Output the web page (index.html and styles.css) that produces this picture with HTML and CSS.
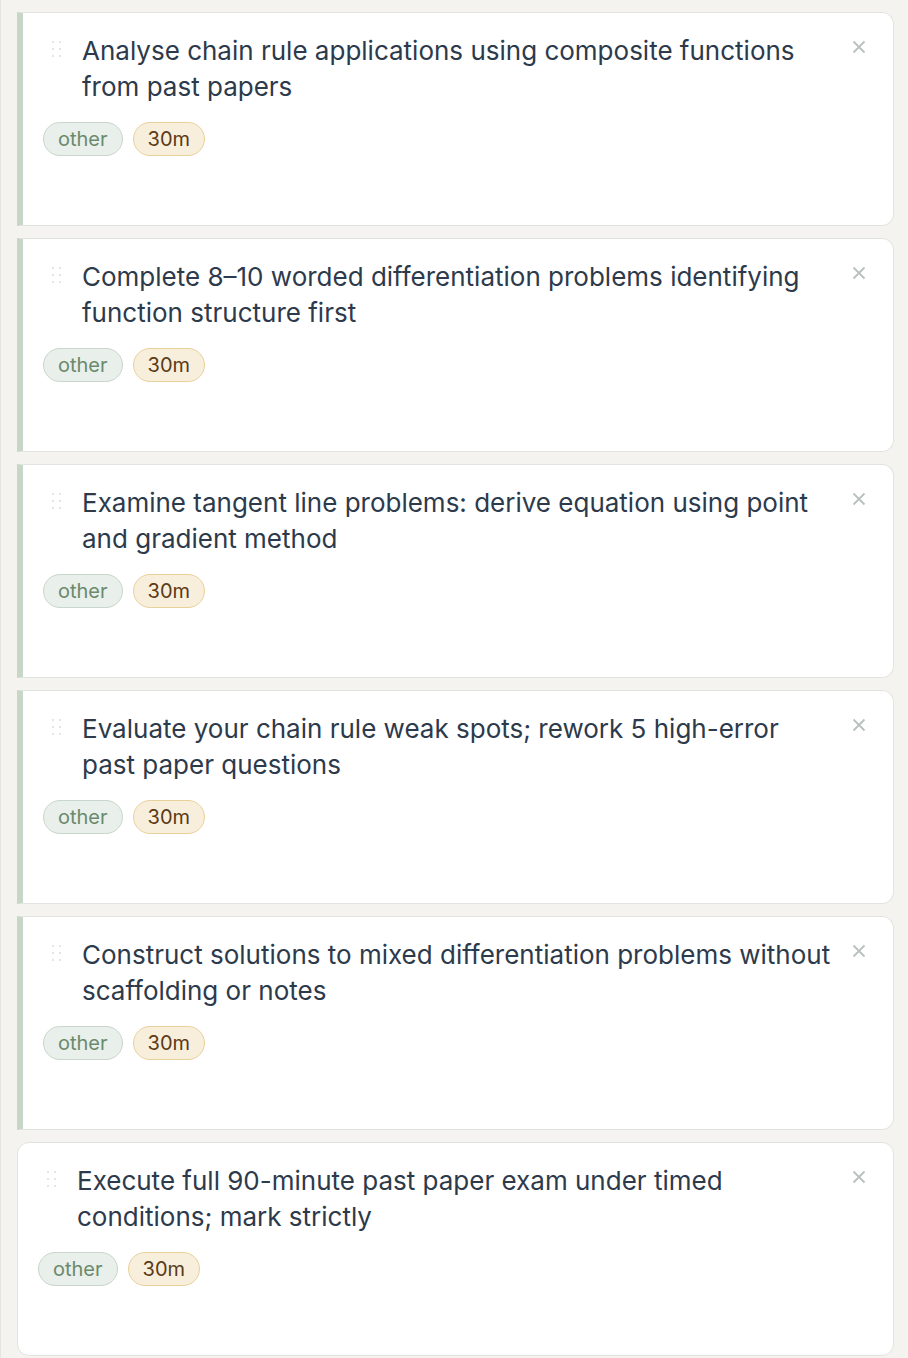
FILE: index.html
```html
<!DOCTYPE html>
<html lang="en">
<head>
  <meta charset="UTF-8">
  <title>Study tasks</title>
  <link rel="stylesheet" href="styles.css">
</head>
<body>

<div class="list">
  <div class="task marked">
    <div class="task-head">
      <span class="handle"><i></i><i></i><i></i><i></i><i></i><i></i></span>
      <div class="title">Analyse chain rule applications using composite functions from past papers</div>
      <button class="close" aria-label="Remove"><svg width="14" height="14" viewBox="0 0 14 14"><path d="M1.5 1.5 L12.5 12.5 M12.5 1.5 L1.5 12.5"/></svg></button>
    </div>
    <div class="tags">
      <span class="tag kind">other</span>
      <span class="tag time">30m</span>
    </div>
  </div>

  <div class="task marked">
    <div class="task-head">
      <span class="handle"><i></i><i></i><i></i><i></i><i></i><i></i></span>
      <div class="title">Complete 8–10 worded differentiation problems identifying function structure first</div>
      <button class="close" aria-label="Remove"><svg width="14" height="14" viewBox="0 0 14 14"><path d="M1.5 1.5 L12.5 12.5 M12.5 1.5 L1.5 12.5"/></svg></button>
    </div>
    <div class="tags">
      <span class="tag kind">other</span>
      <span class="tag time">30m</span>
    </div>
  </div>

  <div class="task marked">
    <div class="task-head">
      <span class="handle"><i></i><i></i><i></i><i></i><i></i><i></i></span>
      <div class="title">Examine tangent line problems: derive equation using point and gradient method</div>
      <button class="close" aria-label="Remove"><svg width="14" height="14" viewBox="0 0 14 14"><path d="M1.5 1.5 L12.5 12.5 M12.5 1.5 L1.5 12.5"/></svg></button>
    </div>
    <div class="tags">
      <span class="tag kind">other</span>
      <span class="tag time">30m</span>
    </div>
  </div>

  <div class="task marked">
    <div class="task-head">
      <span class="handle"><i></i><i></i><i></i><i></i><i></i><i></i></span>
      <div class="title">Evaluate your chain rule weak spots; rework 5 high-error past paper questions</div>
      <button class="close" aria-label="Remove"><svg width="14" height="14" viewBox="0 0 14 14"><path d="M1.5 1.5 L12.5 12.5 M12.5 1.5 L1.5 12.5"/></svg></button>
    </div>
    <div class="tags">
      <span class="tag kind">other</span>
      <span class="tag time">30m</span>
    </div>
  </div>

  <div class="task marked">
    <div class="task-head">
      <span class="handle"><i></i><i></i><i></i><i></i><i></i><i></i></span>
      <div class="title">Construct solutions to mixed differentiation problems without scaffolding or notes</div>
      <button class="close" aria-label="Remove"><svg width="14" height="14" viewBox="0 0 14 14"><path d="M1.5 1.5 L12.5 12.5 M12.5 1.5 L1.5 12.5"/></svg></button>
    </div>
    <div class="tags">
      <span class="tag kind">other</span>
      <span class="tag time">30m</span>
    </div>
  </div>

  <div class="task">
    <div class="task-head">
      <span class="handle"><i></i><i></i><i></i><i></i><i></i><i></i></span>
      <div class="title">Execute full 90-minute past paper exam under timed conditions; mark strictly</div>
      <button class="close" aria-label="Remove"><svg width="14" height="14" viewBox="0 0 14 14"><path d="M1.5 1.5 L12.5 12.5 M12.5 1.5 L1.5 12.5"/></svg></button>
    </div>
    <div class="tags">
      <span class="tag kind">other</span>
      <span class="tag time">30m</span>
    </div>
  </div>
</div>

</body>
</html>
```

FILE: styles.css
```css
body {
  margin: 0;
  background-color: #f4f3ef;
  font-family: Inter, "Noto Sans", sans-serif;
  color: #2d3a4b;
  border-left: 1px solid #e6e5e0;
  min-height: 1358px;
  box-sizing: border-box;
}

.list {
  display: flex;
  flex-direction: column;
  gap: 12px;
  padding: 12px 14px 0 16px;
}

/* card */
.task {
  background-color: #fff;
  border: 1px solid #e2e4df;
  border-radius: 12px;
  padding: 20px 21px 69px 20px;
}

.task.marked {
  border-left: 6px solid #c7d6c7;
  border-radius: 0 12px 12px 0;
}

.task-head {
  display: flex;
  align-items: flex-start;
}

.handle {
  display: grid;
  grid-template-columns: 2px 2px;
  gap: 5px 5px;
  margin: 8px 21px 0 9px;
  flex-shrink: 0;
}

.handle i {
  display: block;
  width: 2px;
  height: 2px;
  border-radius: 1px;
  background-color: #d9dcda;
}

.title {
  flex: 1;
  font-size: 26px;
  line-height: 36px;
  padding-right: 17px;
}

.close {
  border: 0;
  background: none;
  padding: 0;
  margin: 7px 6px 0 0;
  width: 14px;
  height: 14px;
  cursor: pointer;
}

.close svg {
  display: block;
}

.close path {
  stroke: #b9c0c0;
  stroke-width: 1.8;
  fill: none;
}

/* tags */
.tags {
  display: flex;
  gap: 10px;
  margin-top: 17px;
}

.tag {
  font-size: 20px;
  line-height: 30px;
  padding: 1px 14px;
  border-radius: 17px;
  border: 1px solid;
}

.tag.kind {
  background-color: #e9efea;
  border-color: #c9d6cb;
  color: #6b8a6c;
}

.tag.time {
  background-color: #f8eedc;
  border-color: #e9d19a;
  color: #5b3a17;
}
```
